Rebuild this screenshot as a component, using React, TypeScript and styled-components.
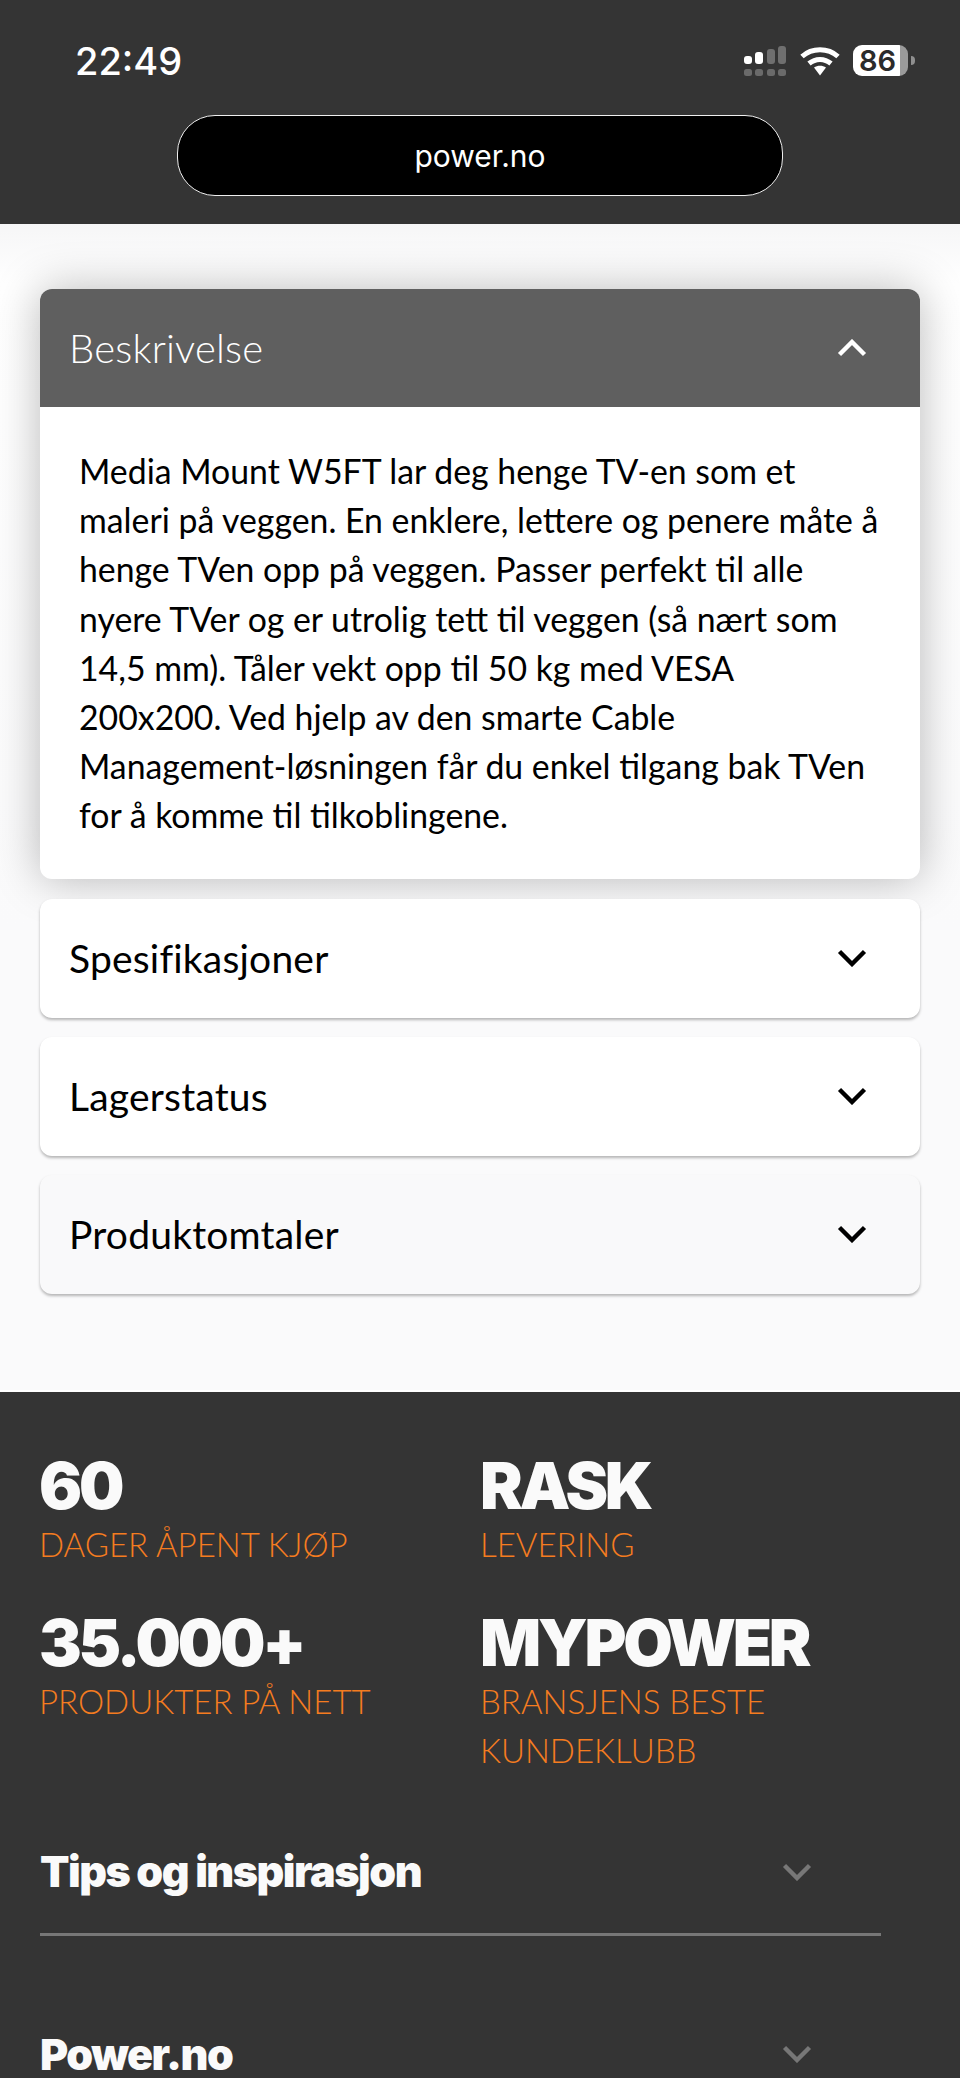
import React from "react";
import styled, { createGlobalStyle } from "styled-components";

const GlobalStyle = createGlobalStyle`
  html, body {
    margin: 0;
    padding: 0;
    background: #fafafb;
  }
  * {
    box-sizing: border-box;
  }
`;

const accordionItems = ["Spesifikasjoner", "Lagerstatus", "Produktomtaler"];

const description = [
  "Media Mount W5FT lar deg henge TV-en som et",
  "maleri på veggen. En enklere, lettere og penere måte å",
  "henge TVen opp på veggen. Passer perfekt til alle",
  "nyere TVer og er utrolig tett til veggen (så nært som",
  "14,5 mm). Tåler vekt opp til 50 kg med VESA",
  "200x200. Ved hjelp av den smarte Cable",
  "Management-løsningen får du enkel tilgang bak TVen",
  "for å komme til tilkoblingene.",
];

function Chevron({ up, color }: { up?: boolean; color: string }) {
  return (
    <ChevronIcon viewBox="0 0 30 18" fill="none">
      <path
        d={up ? "M2.5 15.5 15 3l12.5 12.5" : "M2.5 2.5 15 15 27.5 2.5"}
        stroke={color}
        strokeWidth="4.4"
      />
    </ChevronIcon>
  );
}

function App() {
  return (
    <Page>
      <GlobalStyle />
      <TopBar>
        <StatusBar>
          <Time>22:49</Time>
          <StatusIcons>
            <svg width="42" height="30" viewBox="0 0 42 30">
              <rect x="0" y="10" width="8" height="8" rx="3" fill="#fff" />
              <rect x="11" y="6" width="8" height="12" rx="3" fill="#fff" />
              <rect x="23" y="3" width="8" height="15" rx="3" fill="#6f6f6f" />
              <rect x="34" y="0" width="8" height="18" rx="3" fill="#6f6f6f" />
              <rect x="0" y="23" width="8" height="7" rx="2.5" fill="#6a6a6a" />
              <rect x="11" y="23" width="8" height="7" rx="2.5" fill="#6a6a6a" />
              <rect x="23" y="23" width="8" height="7" rx="2.5" fill="#6a6a6a" />
              <rect x="34" y="23" width="8" height="7" rx="2.5" fill="#6a6a6a" />
            </svg>
            <WifiIcon width="40" height="30" viewBox="0 0 40 30" fill="none">
              <path d="M2 10.5C12 1.5 28 1.5 38 10.5" stroke="#fff" strokeWidth="5" />
              <path d="M9 17.5c6.5-5.5 15.5-5.5 22 0" stroke="#fff" strokeWidth="5" />
              <path d="M14 21.5c3.5-2.5 8.5-2.5 12 0L20 29.5z" fill="#fff" />
            </WifiIcon>
            <Battery>86</Battery>
            <BatteryNub />
          </StatusIcons>
        </StatusBar>
        <AddressRow>
          <AddressPill>power.no</AddressPill>
        </AddressRow>
      </TopBar>

      <Content>
        <OpenCard>
          <OpenHeader>
            <CardTitle $light>Beskrivelse</CardTitle>
            <Chevron up color="#fff" />
          </OpenHeader>
          <CardBody>
            {description.map((line) => (
              <BodyLine key={line}>{line}</BodyLine>
            ))}
          </CardBody>
        </OpenCard>
        <CardList>
          {accordionItems.map((item, i) => (
            <ClosedCard key={item} $faded={i === 2}>
              <CardTitle>{item}</CardTitle>
              <Chevron color="#000" />
            </ClosedCard>
          ))}
        </CardList>
      </Content>

      <Footer>
        <StatGrid>
          <Stat>
            <StatValue>60</StatValue>
            <StatLabel>DAGER ÅPENT KJØP</StatLabel>
          </Stat>
          <Stat>
            <StatValue>RASK</StatValue>
            <StatLabel>LEVERING</StatLabel>
          </Stat>
          <Stat>
            <StatValue>35.000+</StatValue>
            <StatLabel>PRODUKTER PÅ NETT</StatLabel>
          </Stat>
          <Stat>
            <StatValue>MYPOWER</StatValue>
            <StatLabel>
              BRANSJENS BESTE
              <br />
              KUNDEKLUBB
            </StatLabel>
          </Stat>
        </StatGrid>
        <FooterLinks>
          <FooterRow $divider>
            <FooterTitle>Tips og inspirasjon</FooterTitle>
            <Chevron color="#777" />
          </FooterRow>
          <FooterRow>
            <FooterTitle>Power.no</FooterTitle>
            <Chevron color="#777" />
          </FooterRow>
        </FooterLinks>
      </Footer>
    </Page>
  );
}

const Page = styled.div`
  width: 960px;
  height: 2078px;
  overflow: hidden;
  font-family: "Lato", "Liberation Sans", sans-serif;
`;

const TopBar = styled.header`
  height: 224px;
  background: #343434;
  color: #fff;
`;

const StatusBar = styled.div`
  height: 115px;
  padding: 42px 45px 0 75px;
  display: flex;
  justify-content: space-between;
  align-items: flex-start;
`;

const Time = styled.div`
  font-family: "Inter", sans-serif;
  font-size: 38px;
  font-weight: 500;
  line-height: 38px;
`;

const StatusIcons = styled.div`
  display: flex;
  align-items: flex-start;
  padding-top: 4px;
`;

const WifiIcon = styled.svg`
  margin-left: 14px;
`;

const Battery = styled.div`
  width: 55px;
  height: 31px;
  margin: -1px 0 0 13px;
  border-radius: 9px;
  background: linear-gradient(to right, #fff 47px, #9a9a9a 47px);
  color: #2b2b2b;
  font-family: "Inter", sans-serif;
  font-size: 29px;
  font-weight: 600;
  line-height: 31px;
  padding-left: 6px;
`;

const BatteryNub = styled.div`
  width: 4px;
  height: 9px;
  margin: 10px 0 0 3px;
  border-radius: 0 4px 4px 0;
  background: #8f8f8f;
`;

const AddressRow = styled.div`
  display: flex;
  justify-content: center;
`;

const AddressPill = styled.div`
  width: 606px;
  height: 81px;
  background: #000;
  border: 1.5px solid #efefef;
  border-radius: 38px;
  display: flex;
  align-items: center;
  justify-content: center;
  font-family: "Inter", sans-serif;
  font-size: 30px;
`;

const Content = styled.main`
  height: 1168px;
  padding: 65px 40px 0;
  background: linear-gradient(#f6f6f7, #fff 60px, #fafafb 700px);
  border-bottom: 2px solid #fff;
`;

const OpenCard = styled.section`
  border-radius: 12px;
  overflow: hidden;
  background: #fff;
  box-shadow: 0 0 46px rgba(0, 0, 0, 0.28);
`;

const OpenHeader = styled.div`
  height: 118px;
  background: #5f5f5f;
  display: flex;
  align-items: center;
  justify-content: space-between;
  padding: 0 53px 0 29px;
`;

const CardTitle = styled.h2<{ $light?: boolean }>`
  margin: 0;
  font-size: ${(p) => (p.$light ? 40 : 39)}px;
  font-weight: ${(p) => (p.$light ? 300 : 400)};
  letter-spacing: 0.2px;
  color: ${(p) => (p.$light ? "#fff" : "#000")};
`;

const ChevronIcon = styled.svg`
  width: 30px;
  height: 18px;
  display: block;
`;

const CardBody = styled.div`
  padding: 40px 20px 38px 39px;
`;

const BodyLine = styled.div`
  font-size: 33.8px;
  line-height: 49.2px;
  color: #000;
  white-space: nowrap;
`;

const CardList = styled.div`
  margin-top: 20px;
  display: flex;
  flex-direction: column;
  gap: 19px;
  position: relative;
`;

const ClosedCard = styled.div<{ $faded?: boolean }>`
  height: 119px;
  border-radius: 12px;
  background: ${(p) => (p.$faded ? "#f9f9fa" : "#fff")};
  box-shadow: 0 2px 3px rgba(0, 0, 0, 0.28);
  display: flex;
  align-items: center;
  justify-content: space-between;
  padding: 0 53px 0 29px;
`;

const Footer = styled.footer`
  background: #343434;
  height: 686px;
  padding: 60px 0 0 39px;
`;

const StatGrid = styled.div`
  display: grid;
  grid-template-columns: 441px 1fr;
  row-gap: 40px;
`;

const Stat = styled.div``;

const StatValue = styled.div`
  font-family: "Inter", sans-serif;
  font-size: 64px;
  font-weight: 900;
  letter-spacing: -3.2px;
  line-height: 68px;
  color: #fafafa;
`;

const StatLabel = styled.div`
  font-size: 33px;
  font-weight: 300;
  line-height: 49px;
  color: #f57c20;
`;

const FooterLinks = styled.div`
  margin: 38px 0 0 1px;
  display: flex;
  flex-direction: column;
  gap: 58px;
`;

const FooterRow = styled.div<{ $divider?: boolean }>`
  width: 841px;
  height: ${(p) => (p.$divider ? 123 : 120)}px;
  display: flex;
  align-items: center;
  justify-content: space-between;
  padding-right: 69px;
  padding-bottom: ${(p) => (p.$divider ? 3 : 0)}px;
  border-bottom: ${(p) => (p.$divider ? "3px solid #777" : "none")};
`;

const FooterTitle = styled.h3`
  margin: 0;
  font-family: "Inter", sans-serif;
  font-size: 43px;
  font-weight: 900;
  line-height: 1;
  letter-spacing: -1.5px;
  color: #fafafa;
`;

export default App;
